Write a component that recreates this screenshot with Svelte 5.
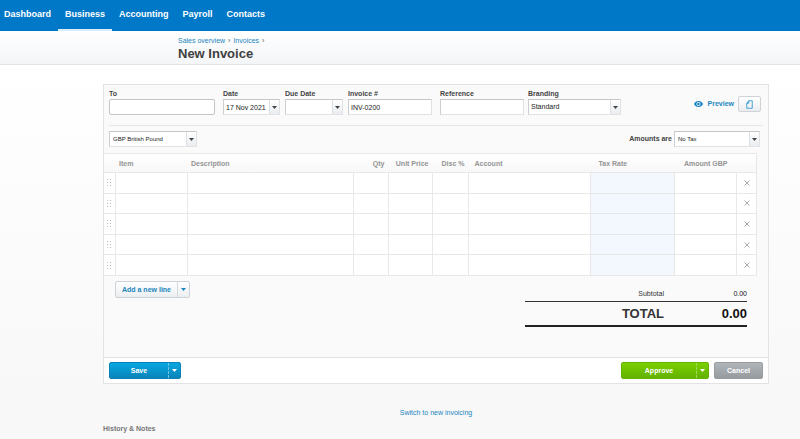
<script>
  const navItems = ['Dashboard', 'Business', 'Accounting', 'Payroll', 'Contacts'];
  let activeNav = $state('Business');

  const columns = [
    { id: 'item', label: 'Item' },
    { id: 'description', label: 'Description' },
    { id: 'qty', label: 'Qty', numeric: true },
    { id: 'price', label: 'Unit Price', numeric: true },
    { id: 'disc', label: 'Disc %', numeric: true },
    { id: 'account', label: 'Account' },
    { id: 'tax', label: 'Tax Rate' },
    { id: 'amount', label: 'Amount GBP', numeric: true }
  ];

  let nextId = 5;
  let lines = $state([0, 1, 2, 3, 4].map((id) => ({ id })));

  let invoice = $state({
    to: '',
    date: '17 Nov 2021',
    due: '',
    number: 'INV-0200',
    reference: ''
  });

  const total = $derived(
    lines.reduce((sum, line) => sum + (Number(line.amount) || 0), 0).toFixed(2)
  );

  function addLine() {
    lines.push({ id: nextId++ });
  }

  function removeLine(id) {
    lines = lines.filter((line) => line.id !== id);
  }
</script>

{#snippet caret()}
  <svg class="caret" viewBox="0 0 5 3" aria-hidden="true"><path d="M0 0h5L2.5 3z" /></svg>
{/snippet}

<div class="page">
  <nav class="topnav">
    {#each navItems as item}
      <a href="#{item.toLowerCase()}" class:active={activeNav === item} onclick={() => (activeNav = item)}>{item}</a>
    {/each}
  </nav>

  <header class="heading">
    <div class="breadcrumb">
      <a href="#sales">Sales overview</a><span>›</span><a href="#invoices">Invoices</a><span>›</span>
    </div>
    <h1>New Invoice</h1>
  </header>

  <main>
    <form class="panel" onsubmit={(e) => e.preventDefault()}>
      <div class="fields">
        <div class="field to">
          <label for="to">To</label>
          <input id="to" class="box" bind:value={invoice.to} />
        </div>
        <div class="field date">
          <label for="date">Date</label>
          <div class="combo">
            <input id="date" class="box" bind:value={invoice.date} />
            <button type="button" class="drop" aria-label="Pick date">{@render caret()}</button>
          </div>
        </div>
        <div class="field due">
          <label for="due">Due Date</label>
          <div class="combo">
            <input id="due" class="box" bind:value={invoice.due} />
            <button type="button" class="drop" aria-label="Pick due date">{@render caret()}</button>
          </div>
        </div>
        <div class="field number">
          <label for="number">Invoice #</label>
          <input id="number" class="box" bind:value={invoice.number} />
        </div>
        <div class="field reference">
          <label for="reference">Reference</label>
          <input id="reference" class="box" bind:value={invoice.reference} />
        </div>
        <div class="field branding">
          <label for="branding">Branding</label>
          <div class="combo">
            <select id="branding" class="box"><option>Standard</option></select>
            <span class="drop">{@render caret()}</span>
          </div>
        </div>
        <div class="tools">
          <a class="preview" href="#preview">
            <svg viewBox="0 0 18 12" aria-hidden="true">
              <path fill-rule="evenodd" d="M9 0C5 0 1.8 2.4 0 6c1.800 3.600 5 6 9 6s7.200-2.400 9-6C16.200 2.400 13 0 9 0zm0 10.200A4.200 4.200 0 1 1 9 1.800a4.200 4.200 0 0 1 0 8.400z" />
              <circle cx="9" cy="6" r="2.400" />
            </svg>
            Preview
          </a>
          <button type="button" class="light file" aria-label="Files">
            <svg viewBox="0 0 14 18" aria-hidden="true"><path d="M5.500 1.500H12.500V16.500H1.500V6.500zM5.500 1.500V6.500H1.500" /></svg>
          </button>
        </div>
      </div>

      <div class="options">
        <div class="combo currency">
          <select class="box" aria-label="Currency"><option>GBP British Pound</option></select>
          <span class="drop">{@render caret()}</span>
        </div>
        <div class="amounts">
          <label for="amounts">Amounts are</label>
          <div class="combo">
            <select id="amounts" class="box"><option>No Tax</option></select>
            <span class="drop">{@render caret()}</span>
          </div>
        </div>
      </div>

      <table>
        <colgroup>
          <col class="c-grip" />
          {#each columns as col}
            <col class="c-{col.id}" />
          {/each}
          <col class="c-remove" />
        </colgroup>
        <thead>
          <tr>
            <th></th>
            {#each columns as col}
              <th class:numeric={col.numeric}>{col.label}</th>
            {/each}
            <th></th>
          </tr>
        </thead>
        <tbody>
          {#each lines as line (line.id)}
            <tr>
              <td class="grip">
                <svg viewBox="0 0 4 7" aria-hidden="true"><path d="M0 0h1v1H0zM3 0h1v1H3zM0 3h1v1H0zM3 3h1v1H3zM0 6h1v1H0zM3 6h1v1H3z" /></svg>
              </td>
              {#each columns as col}
                <td class:tax={col.id === 'tax'}>
                  <input class:numeric={col.numeric} aria-label={col.label} bind:value={line[col.id]} />
                </td>
              {/each}
              <td>
                <button type="button" class="remove" aria-label="Remove line" onclick={() => removeLine(line.id)}>
                  <svg viewBox="0 0 6 6" aria-hidden="true"><path d="M.5.5l5 5M5.500.5l-5 5" /></svg>
                </button>
              </td>
            </tr>
          {/each}
        </tbody>
      </table>

      <div class="summary">
        <div class="split light">
          <button type="button" onclick={addLine}>Add a new line</button>
          <button type="button" class="more" aria-label="Add several lines">{@render caret()}</button>
        </div>
        <dl>
          <div class="subtotal"><dt>Subtotal</dt><dd>{total}</dd></div>
          <div class="total"><dt>TOTAL</dt><dd>{total}</dd></div>
        </dl>
      </div>

      <footer>
        <div class="split blue">
          <button type="submit">Save</button>
          <button type="button" class="more" aria-label="Save options">{@render caret()}</button>
        </div>
        <div class="actions">
          <div class="split green">
            <button type="button">Approve</button>
            <button type="button" class="more" aria-label="Approve options">{@render caret()}</button>
          </div>
          <button type="button" class="cancel">Cancel</button>
        </div>
      </footer>
    </form>

    <p class="switch"><a href="#new-invoicing">Switch to new invoicing</a></p>
    <h2>History &amp; Notes</h2>
  </main>
</div>

<style>
  :global(body) {
    background: #f8f8f8;
  }

  .page {
    --blue: #0078c8;
    --link: #1a86bd;
    font: 7px/10px Arial, "Liberation Sans", sans-serif;
    color: #333;
    background: linear-gradient(#fff 64px, #f8f8f8 400px);
  }

  .page * {
    box-sizing: border-box;
  }

  a {
    color: var(--link);
    text-decoration: none;
  }

  button,
  input,
  select {
    margin: 0;
    padding: 0;
    border: 0;
    font: inherit;
    color: inherit;
    background: none;
  }

  button {
    cursor: pointer;
  }

  svg {
    display: block;
  }

  .caret {
    width: 5px;
    height: 3px;
    fill: currentColor;
  }

  /* Top navigation */
  .topnav {
    display: flex;
    height: 31px;
    background: var(--blue);
  }

  .topnav a {
    padding: 0 7px;
    border-bottom: 2px solid transparent;
    font-size: 9px;
    line-height: 29px;
    font-weight: bold;
    color: #fff;
  }

  .topnav a:first-child {
    padding-left: 4px;
  }

  .topnav a.active {
    border-bottom-color: #d9edf8;
  }

  /* Page heading */
  .heading {
    height: 34px;
    padding: 5px 31px 0 178px;
    background: linear-gradient(#fff, #f3f5f7);
    border-bottom: 1px solid #e1e3e5;
  }

  .breadcrumb span {
    margin: 0 3px;
    color: #555;
  }

  h1 {
    margin: 0;
    font-size: 13px;
    line-height: 16px;
    color: #404040;
  }

  main {
    padding: 19px 31px 5px 103px;
  }

  .panel {
    background: #fafafa;
    border: 1px solid #e3e3e3;
  }

  /* Invoice fields */
  .fields {
    display: flex;
    margin: 0 5px;
    height: 41px;
    padding-top: 4px;
    border-bottom: 1px solid #e6e6e6;
  }

  label {
    display: block;
    font-weight: bold;
    color: #444;
  }

  .box {
    display: block;
    width: 100%;
    height: 16px;
    padding: 0 2px;
    border: 1px solid #e2e2e2;
    border-top-color: #c4c6c8;
    border-left-color: #ccced0;
    border-radius: 0;
    background: #fff;
    color: #222;
    appearance: none;
  }

  .to {
    width: 106px;
    margin-right: 8px;
  }

  .to .box {
    border-color: #c3c6c9;
    border-radius: 2px;
  }

  .date,
  .due {
    width: 58px;
    margin-right: 5px;
  }

  .date {
    width: 57px;
  }

  .number,
  .reference {
    width: 84px;
  }

  .number {
    margin-right: 8px;
  }

  .reference {
    margin-right: 4px;
  }

  .branding {
    width: 93px;
  }

  .combo {
    position: relative;
  }

  .drop {
    position: absolute;
    top: 1px;
    right: 1px;
    bottom: 1px;
    width: 10px;
    display: grid;
    place-items: center;
    border-left: 1px solid #dde0e3;
    background: linear-gradient(#fff, #e9edf1);
    color: #444;
    pointer-events: none;
  }

  button.drop {
    pointer-events: auto;
  }

  .tools {
    display: flex;
    align-items: center;
    gap: 4px;
    margin-left: auto;
    padding-right: 2px;
    height: 30px;
  }

  .preview {
    display: flex;
    align-items: center;
    gap: 5px;
    font-weight: bold;
  }

  .preview svg {
    width: 9px;
    height: 6px;
    fill: #0a80bd;
  }

  .file {
    display: grid;
    place-items: center;
    width: 23px;
    height: 16px;
  }

  .file svg {
    width: 7px;
    height: 9px;
    fill: none;
    stroke: #1a90cc;
    stroke-width: 1.6;
  }

  .options {
    display: flex;
    justify-content: space-between;
    padding: 5px 8px 6px 5px;
  }

  .options .box {
    font-size: 6px;
    padding-left: 3px;
  }

  .currency {
    width: 88px;
  }

  .amounts {
    display: flex;
    align-items: center;
    gap: 2px;
  }

  .amounts .combo {
    width: 86px;
  }

  /* Line items */
  table {
    width: calc(100% - 11px);
    height: 123px;
    table-layout: fixed;
    border-collapse: collapse;
    background: #fff;
    border: 1px solid #e8e8e8;
    border-left: 0;
  }

  .c-grip { width: 11px; }
  .c-item { width: 72px; }
  .c-qty { width: 35px; }
  .c-price { width: 44px; }
  .c-disc { width: 36px; }
  .c-account { width: 122px; }
  .c-tax { width: 84px; }
  .c-amount { width: 62px; }
  .c-remove { width: 20px; }

  thead {
    background: linear-gradient(#fff, #f7f7f7);
  }

  th {
    height: 19px;
    padding: 2px 4px 0;
    border-bottom: 1px solid #e8e8e8;
    text-align: left;
    color: #949494;
    white-space: nowrap;
  }

  th:nth-child(7) {
    padding-left: 6px;
  }

  th:nth-child(8) {
    padding-left: 8px;
  }

  th.numeric {
    text-align: right;
    padding: 2px 4px 0 0;
  }

  th.numeric:nth-child(9) {
    padding-right: 9px;
  }

  td {
    padding: 0;
    border: 1px solid #e8e8e8;
    vertical-align: middle;
  }

  td:first-child {
    border-left: 0;
  }

  td.tax {
    background: #f2f8fe;
  }

  td input {
    display: block;
    width: 100%;
    height: 16px;
    padding: 0 4px;
  }

  input.numeric {
    text-align: right;
  }

  .grip svg {
    width: 4px;
    height: 7px;
    margin: 0 auto;
    fill: #bbb;
  }

  .remove {
    display: block;
    margin: 0 auto;
    padding: 4px;
  }

  .remove svg {
    width: 6px;
    height: 6px;
    stroke: #aaa;
  }

  /* Totals */
  .summary {
    display: flex;
    justify-content: space-between;
    align-items: flex-start;
    height: 81px;
    padding: 5px 21px 0 11px;
  }

  dl {
    width: 222px;
    margin: 0;
  }

  dl div {
    display: grid;
    grid-template-columns: 1fr 83px;
    text-align: right;
  }

  dd {
    margin: 0;
    color: #111;
  }

  .subtotal {
    padding: 8px 0 2px;
    border-bottom: 1px solid #333;
  }

  .total {
    border-bottom: 2px solid #222;
    font-size: 13px;
    line-height: 23px;
    font-weight: bold;
  }

  /* Buttons */
  .light {
    border: 1px solid #cfd3d7;
    border-radius: 2px;
    background: linear-gradient(#fff, #ebeef1);
    color: var(--link);
  }

  .split {
    display: flex;
    height: 17px;
    border-radius: 2px;
    font-weight: bold;
  }

  .split button {
    flex: 1;
  }

  .split .more {
    display: grid;
    place-items: center;
    flex: 0 0 12px;
    border-left: 1px solid #d5d9dc;
  }

  .summary .split {
    width: 75px;
  }

  .blue,
  .green,
  .cancel {
    color: #fff;
  }

  .blue {
    width: 72px;
    border: 1px solid #0a82b8;
    background: linear-gradient(#06a8e0, #0883b9);
  }

  .blue .more {
    border-left: 1px dashed #6cc4e6;
  }

  .green {
    width: 88px;
    border: 1px solid #64b300;
    background: linear-gradient(#7bd000, #62b200);
  }

  .green .more {
    border-left: 1px dashed #a3dc55;
  }

  .cancel {
    width: 49px;
    height: 17px;
    border: 1px solid #979ca1;
    border-radius: 2px;
    background: linear-gradient(#b0b5ba, #969ba0);
    font-weight: bold;
  }

  footer {
    display: flex;
    justify-content: space-between;
    padding: 4px 5px;
    border-top: 1px solid #e3e3e3;
    background: #fff;
  }

  .actions {
    display: flex;
    gap: 5px;
  }

  .switch {
    margin: 24px 0 6px;
    text-align: center;
  }

  h2 {
    margin: 0;
    font-size: 7px;
    line-height: 10px;
    color: #777;
  }
</style>
